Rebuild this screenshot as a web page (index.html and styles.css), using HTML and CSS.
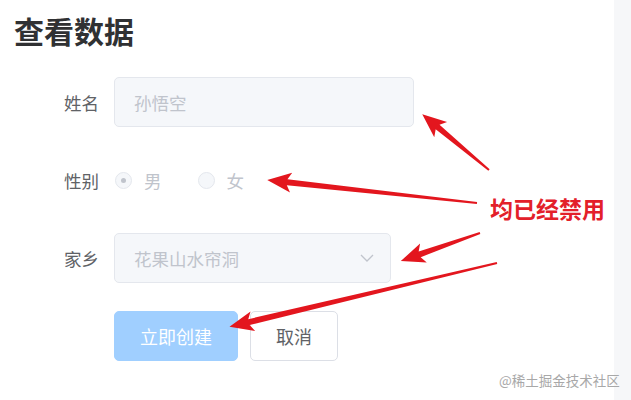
FILE: index.html
```html
<!DOCTYPE html>
<html lang="zh-CN">

<head>
    <meta charset="UTF-8">
    <meta name="viewport" content="width=device-width, initial-scale=1.0">
    <title>查看数据</title>
    <link rel="stylesheet" href="styles.css">
</head>

<body>
    <div class="page">
        <div class="content">
            <h1 class="title">查看数据</h1>

            <form class="form">
                <div class="form-item">
                    <label class="form-label">姓名</label>
                    <input class="input" type="text" value="孙悟空" disabled>
                </div>

                <div class="form-item">
                    <label class="form-label">性别</label>
                    <div class="radio-group">
                        <span class="radio">
                            <span class="radio-circle checked"></span>
                            <span class="radio-text">男</span>
                        </span>
                        <span class="radio">
                            <span class="radio-circle"></span>
                            <span class="radio-text">女</span>
                        </span>
                    </div>
                </div>

                <div class="form-item">
                    <label class="form-label">家乡</label>
                    <div class="select">
                        <span class="select-text">花果山水帘洞</span>
                        <svg class="select-arrow" width="14" height="8" viewBox="0 0 14 8">
                            <path d="M1 1 L7 7 L13 1" fill="none" stroke="#c0c4cc" stroke-width="1.3"/>
                        </svg>
                    </div>
                </div>

                <div class="form-item">
                    <div class="form-label"></div>
                    <button class="btn btn-primary" type="button" disabled>立即创建</button>
                    <button class="btn" type="button">取消</button>
                </div>
            </form>
        </div>

        <div class="side"></div>

        <!-- annotation arrows -->
        <svg class="arrows" width="631" height="400" viewBox="0 0 631 400">
            <g fill="#e3161e">
                <path transform="translate(489 170) rotate(219.9)" d="M0,-1 L67,-3 L63,-10 L87,0 L63,10 L67,3 L0,1Z"/>
                <path transform="translate(477 203) rotate(186.25)" d="M0,-1 L191,-3 L187,-10 L211,0 L187,10 L191,3 L0,1Z"/>
                <path transform="translate(480 233) rotate(160.5)" d="M0,-1 L64,-3 L60,-10 L84,0 L60,10 L64,3 L0,1Z"/>
                <path transform="translate(497 263) rotate(166.6)" d="M0,-1 L255,-3 L251,-10 L275,0 L251,10 L255,3 L0,1Z"/>
            </g>
        </svg>
        <span class="note">均已经禁用</span>
        <span class="watermark">@稀土掘金技术社区</span>
    </div>
</body>

</html>
```

FILE: styles.css
```css
* {
    box-sizing: border-box;
}

body {
    margin: 0;
    font-family: "Noto Sans CJK SC", "Noto Sans", sans-serif;
    background-color: #fff;
}

.page {
    position: relative;
    display: flex;
    width: 631px;
    height: 400px;
    overflow: hidden;
}

.content {
    flex: 1;
    padding: 0 14px;
}

.side {
    width: 17px;
    background-color: #f6f7f9;
}

.title {
    margin: 15px 0 0 0;
    font-size: 30px;
    line-height: 31px;
    font-weight: bold;
    color: #303133;
}

.form {
    margin-top: 31px;
}

.form-item {
    display: flex;
    align-items: center;
    height: 50px;
    margin-bottom: 28px;
}

.form-label {
    width: 100px;
    padding-right: 15px;
    text-align: right;
    font-size: 17.5px;
    color: #606266;
}

.input {
    width: 300px;
    height: 50px;
    padding: 0 19px;
    border: 1px solid #e4e7ed;
    border-radius: 5px;
    background-color: #f5f7fa;
    font-family: inherit;
    font-size: 17.5px;
    color: #c0c4cc;
}

.radio-group {
    display: flex;
    align-items: center;
}

.radio {
    display: flex;
    align-items: center;
    margin-right: 35px;
}

.radio-circle {
    display: flex;
    align-items: center;
    justify-content: center;
    width: 17px;
    height: 17px;
    margin-left: 1px;
    border: 1px solid #e4e7ed;
    border-radius: 50%;
    background-color: #f5f7fa;
}

.radio-circle.checked::after {
    content: "";
    width: 5px;
    height: 5px;
    border-radius: 50%;
    background-color: #c0c4cc;
}

.radio-text {
    margin-left: 12px;
    font-size: 17.5px;
    color: #c0c4cc;
}

.select {
    display: flex;
    align-items: center;
    justify-content: space-between;
    width: 277px;
    height: 50px;
    padding: 0 16px 0 19px;
    border: 1px solid #e4e7ed;
    border-radius: 5px;
    background-color: #f5f7fa;
}

.select-text {
    font-size: 17.5px;
    color: #c0c4cc;
}

.btn {
    height: 50px;
    padding: 0 25px;
    border: 1px solid #dcdfe6;
    border-radius: 5px;
    background-color: #fff;
    font-family: inherit;
    font-size: 18px;
    color: #606266;
    margin-right: 12px;
}

.btn-primary {
    border-color: #a0cfff;
    background-color: #a0cfff;
    color: #fff;
}

.arrows {
    position: absolute;
    left: 0;
    top: 0;
}

.note {
    position: absolute;
    left: 490px;
    top: 193px;
    font-size: 23px;
    line-height: 30px;
    font-weight: bold;
    color: #e3202a;
}

.watermark {
    position: absolute;
    left: 499px;
    top: 370px;
    font-size: 13.5px;
    color: #a8a8a8;
}
```
